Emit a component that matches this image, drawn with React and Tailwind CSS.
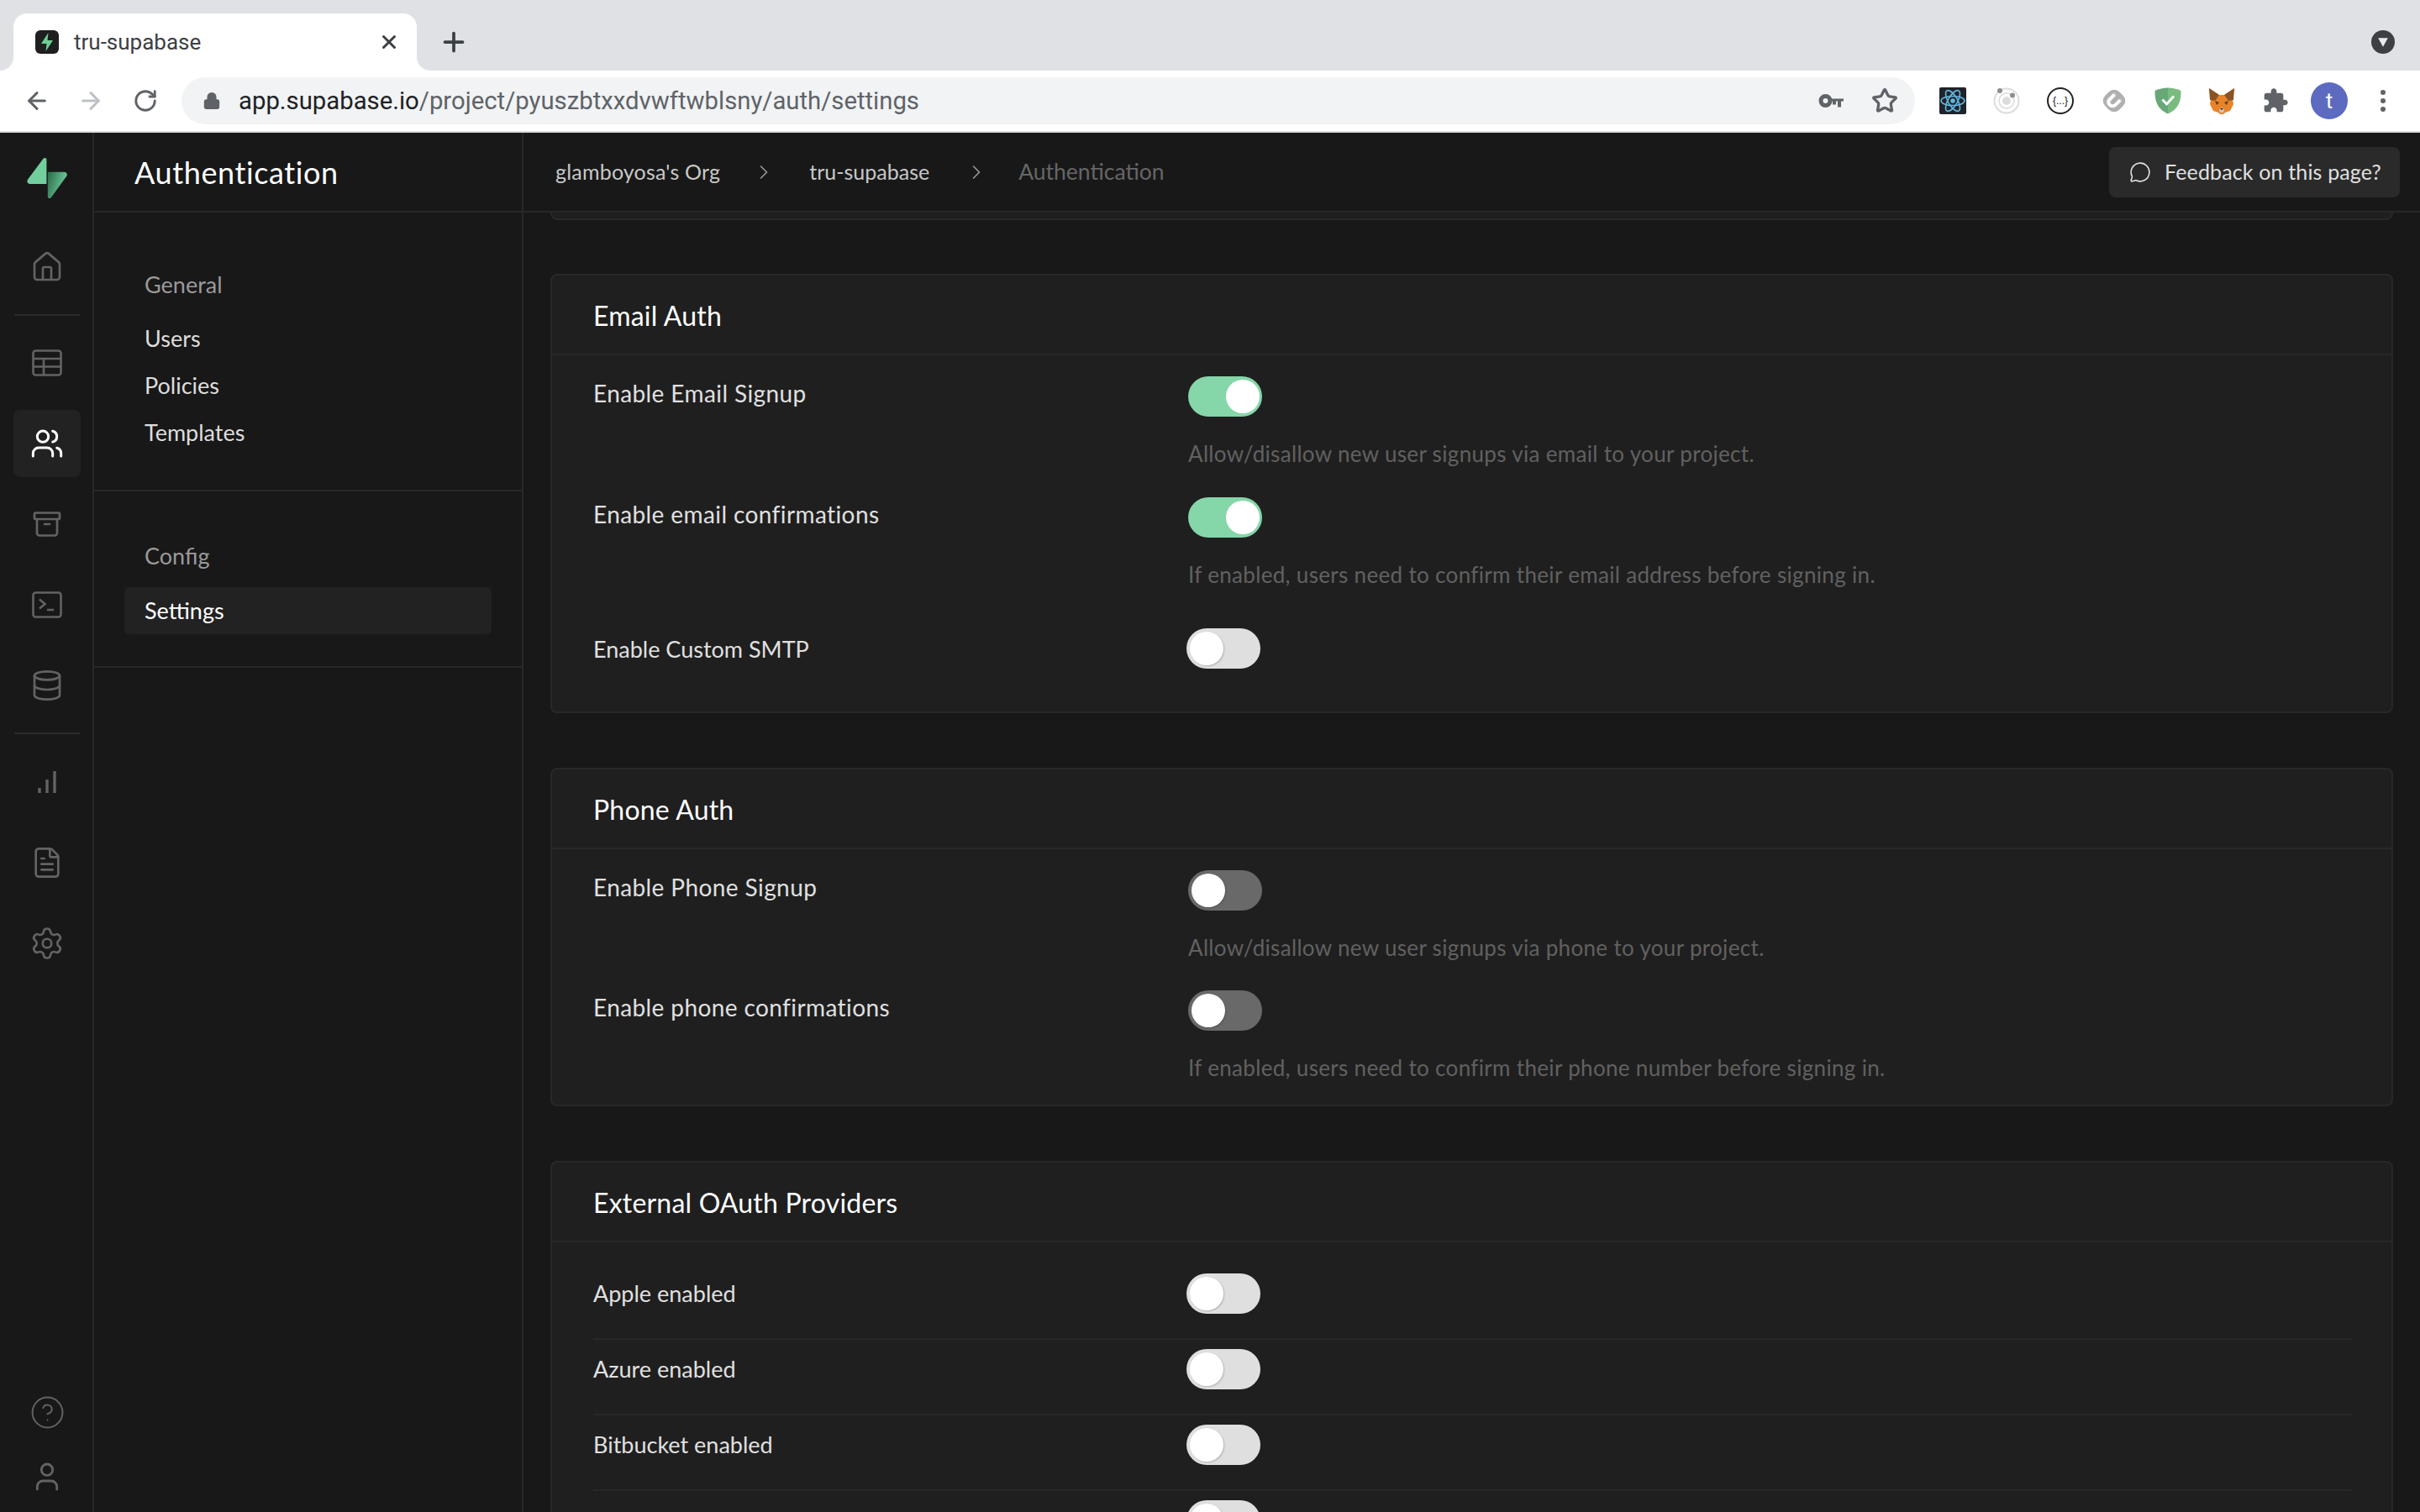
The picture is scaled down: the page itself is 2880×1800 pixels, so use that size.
import React from 'react';
import { ArrowLeft, ArrowRight, RotateCw, Lock, Star, X, Plus, Home, Users, Archive, Database, FileText, Settings, CircleHelp, User, MessageCircle, ChevronRight } from 'lucide-react';

const font = 'font-["Lato","Liberation_Sans",sans-serif]';

// supabase mark, two halves
const Bolt = ({ className }) => (
    <svg viewBox="0 0 48 50" className={className}>
        <defs>
            <linearGradient id="boltGrad" x1="0" y1="0.25" x2="0.9" y2="0.6">
                <stop offset="0" stopColor="#2f7250" />
                <stop offset="1" stopColor="#6fce9c" />
            </linearGradient>
        </defs>
        <path d="M19.8 1.6C21 .2 23.4 1 23.4 2.8V32H3.6C.8 32-.6 28.8 1.2 26.6z" fill="#72cf9d" />
        <path d="M24.8 17.7H44.6c2.8 0 4.2 3.2 2.4 5.4L28.6 48.4c-1.2 1.4-3.8.6-3.8-1.2z" fill="url(#boltGrad)" />
    </svg>
);

const TableIcon = () => (
    <svg viewBox="0 0 36 32" className="w-[36px] h-[32px]" fill="none" stroke="currentColor" strokeWidth="2.6">
        <rect x="1.5" y="1.5" width="33" height="29" rx="3" />
        <path d="M1.5 11h33M1.5 20.5h33M14 11v19.5" />
    </svg>
);

const TerminalIcon = () => (
    <svg viewBox="0 0 36 32" className="w-[36px] h-[32px]" fill="none" stroke="currentColor" strokeWidth="2.6">
        <rect x="1.5" y="1.5" width="33" height="29" rx="3" />
        <path d="M9 9.5l6.5 5.5L9 20.5M18 22h8" />
    </svg>
);

const ChartIcon = () => (
    <svg viewBox="0 0 24 28" className="w-[24px] h-[28px]" fill="none" stroke="currentColor" strokeWidth="3.4">
        <path d="M3 27v-6M12 27V11M21 27V1" />
    </svg>
);

const KeyIcon = () => (
    <svg viewBox="0 0 30 20" className="w-[30px] h-[20px]" fill="none" stroke="#5f6368">
        <circle cx="8.5" cy="10" r="5.5" strokeWidth="5" />
        <path d="M14 7.5h16v3h-3v7h-4v-7h-2v4h-4v-4h-3z" fill="#5f6368" strokeWidth="0" />
    </svg>
);

const ReactIcon = () => (
    <div className="w-[32px] h-[32px] rounded-[2px] bg-[#20232a] flex items-center justify-center">
        <svg viewBox="-14 -14 28 28" className="w-[30px] h-[30px]" fill="none" stroke="#61b8e0" strokeWidth="1.5">
            <circle r="2.6" fill="#61b8e0" stroke="none" />
            <ellipse rx="13" ry="5.2" />
            <ellipse rx="13" ry="5.2" transform="rotate(60)" />
            <ellipse rx="13" ry="5.2" transform="rotate(120)" />
        </svg>
    </div>
);

const IonicIcon = () => (
    <svg viewBox="0 0 32 32" className="w-[32px] h-[32px]" fill="none">
        <circle cx="16" cy="16" r="14.5" stroke="#dcdcdc" strokeWidth="2" />
        <circle cx="16" cy="16" r="9" stroke="#dcdcdc" strokeWidth="1.5" />
        <circle cx="16" cy="16" r="5" fill="#dcdcdc" />
        <circle cx="8" cy="4" r="3" fill="#8e8e8e" />
        <circle cx="23" cy="9.5" r="3" fill="#8e8e8e" />
    </svg>
);

const JsonIcon = () => (
    <div className="w-[32px] h-[32px] rounded-full border-2 border-[#222222] flex items-center justify-center text-[12px] font-['Liberation_Sans',sans-serif] text-[#111111] whitespace-nowrap">
        {'{...}'}
    </div>
);

const MagnetIcon = () => (
    <svg viewBox="0 0 32 32" className="w-[32px] h-[32px]">
        <rect x="4" y="4" width="24" height="24" rx="9" transform="rotate(45 16 16)" fill="#b0b0b0" />
        <path d="M17.5 7.5l-6.500 6.500c-2.200 2.200-2.200 4.800-.2 6.800s4.800 2 7-.2l6.500-6.500" fill="none" stroke="#fff" strokeWidth="4" />
        <path d="M15 6l5 5M21 12l5 5" stroke="#b0b0b0" strokeWidth="1.2" />
    </svg>
);

const ShieldIcon = () => (
    <svg viewBox="0 0 32 32" className="w-[32px] h-[32px]">
        <path d="M16 .5C11 .5 5 2 .5 4c0 10 1 21 15.5 27.5z" fill="#68a878" />
        <path d="M16 .5c5 0 11 1.500 15.500 3.500 0 10-1 21-15.500 27.500z" fill="#78bc80" />
        <path d="M9.500 14.500l5 5.500 8.500-9.500" fill="none" stroke="#fff" strokeWidth="2.800" />
    </svg>
);

const FoxIcon = () => (
    <svg viewBox="0 0 32 32" className="w-[32px] h-[32px]">
        <path d="M1 1l12 8h6l12-8-2 14 1 5-4 8-6 2-2 2h-4l-2-2-6-2-4-8 1-5z" fill="#e8832a" />
        <path d="M1 1l12 8-5 7-6-1zM31 1L19 9l5 7 6-1z" fill="#8a5426" />
        <path d="M8 16l5 2-3 3zM24 16l-5 2 3 3z" fill="#5f3d1e" />
        <path d="M13 26l3-2 3 2-1 4h-4z" fill="#d8c8b8" />
        <path d="M14 25h4l-2 2z" fill="#222222" />
    </svg>
);

const PuzzleIcon = () => (
    <svg viewBox="0 0 24 24" className="w-[32px] h-[32px]" fill="#5f6368">
        <path d="M20.5 11H19V7c0-1.100-.9-2-2-2h-4V3.500C13 2.120 11.880 1 10.500 1S8 2.120 8 3.500V5H4c-1.100 0-1.990.9-1.990 2v3.800H3.500c1.490 0 2.700 1.210 2.700 2.700s-1.210 2.700-2.700 2.700H2V20c0 1.100.9 2 2 2h3.800v-1.500c0-1.490 1.210-2.700 2.700-2.700 1.490 0 2.700 1.210 2.700 2.700V22H17c1.100 0 2-.9 2-2v-4h1.500c1.380 0 2.500-1.120 2.500-2.500S21.880 11 20.500 11z" />
    </svg>
);

const Toggle = ({ on, dark }) => {
    if (on) {
        return (
            <div className="w-[88px] h-[48px] rounded-full bg-[#85d6a8] flex items-center justify-end pr-[3px] shrink-0">
                <div className="w-[40px] h-[40px] rounded-full bg-white" />
            </div>
        );
    }
    return (
        <div className={`w-[88px] h-[48px] rounded-full flex items-center pl-[4px] shrink-0 ${dark ? 'bg-[#696969]' : 'bg-[#dfdfdf] -ml-[2px]'}`}>
            <div className="w-[40px] h-[40px] rounded-full bg-white shadow-[1px_1px_2px_rgba(0,0,0,0.2)]" />
        </div>
    );
};

const SideItem = ({ children, active, className }) => (
    <div className={`w-[80px] h-[80px] rounded-[8px] flex items-center justify-center shrink-0 ${active ? 'bg-[#222222] text-white' : 'text-[#636363]'} ${className || ''}`}>
        {children}
    </div>
);

const SettingRow = ({ label, desc, on, dark, className }) => (
    <div className={`flex ${className || ''}`}>
        <div className="w-[757px] pl-[49px] pt-[2px] text-[28px] tracking-[0.4px] leading-[36px] text-[#e0e0e0] shrink-0">{label}</div>
        <div>
            <Toggle on={on} dark={dark} />
            {desc && <div className="mt-[26px] text-[26px] tracking-[0.33px] leading-[36px] text-[#616161]">{desc}</div>}
        </div>
    </div>
);

const Card = ({ title, children, className }) => (
    <div className={`border-2 border-[#282828] rounded-[8px] bg-[#1f1f1f] ${className || ''}`}>
        <div className="h-[95px] border-b-2 border-[#282828] pl-[49px] pt-[2px] flex items-center text-[32px] tracking-[0.2px] text-white">{title}</div>
        {children}
    </div>
);

const NavLink = ({ children, active }) => (
    <div className={`h-[56px] rounded-[6px] pl-[24px] flex items-center text-[27px] ${active ? 'bg-[#222222] text-white' : 'text-[#dddddd]'}`}>{children}</div>
);

const OAuthRow = ({ label, last }) => (
    <div className={`h-[90px] pt-[11px] flex items-start ml-[49px] mr-[48px] ${last ? '' : 'border-b-2 border-[#282828]'}`}>
        <div className="w-[708px] h-[48px] flex items-center text-[27px] text-[#e0e0e0] shrink-0">{label}</div>
        <Toggle />
    </div>
);

export default function App() {
    return (
        <div className={`w-[2880px] h-[1800px] overflow-hidden flex flex-col bg-[#181818] ${font}`}>
            {/* browser chrome */}
            <div className="h-[84px] bg-[#dfe1e5] flex items-end pl-[16px] pr-[30px] shrink-0 font-['Roboto',sans-serif]">
                <div className="relative w-[480px] h-[68px] bg-white rounded-t-[16px] flex items-center pl-[26px] pr-[20px]">
                    <div className="absolute left-[-16px] bottom-0 w-[16px] h-[16px] bg-white">
                        <div className="w-full h-full bg-[#dfe1e5] rounded-br-[16px]" />
                    </div>
                    <div className="absolute right-[-16px] bottom-0 w-[16px] h-[16px] bg-white">
                        <div className="w-full h-full bg-[#dfe1e5] rounded-bl-[16px]" />
                    </div>
                    <div className="w-[28px] h-[28px] rounded-[6px] bg-[#1f1f1f] flex items-center justify-center">
                        <svg viewBox="0 0 24 24" className="w-[24px] h-[24px]"><path d="M13.500 1 5 14h6.500l-1 9L19 10h-6.500z" fill="#6ccf97" /></svg>
                    </div>
                    <span className="ml-[18px] text-[26px] text-[#3c4043] flex-1">tru-supabase</span>
                    <X size={26} strokeWidth={2.75} className="text-[#3c4043]" />
                </div>
                <div className="h-[68px] flex items-center ml-[26px] flex-1">
                    <Plus size={36} strokeWidth={2.5} className="text-[#3c4043]" />
                </div>
                <div className="h-[68px] flex items-center">
                    <div className="w-[28px] h-[28px] rounded-full bg-[#3c4043] flex items-center justify-center">
                        <svg viewBox="0 0 12 12" className="w-[14px] h-[14px]"><path d="M1 2h10L6 11z" fill="#e8eaed" /></svg>
                    </div>
                </div>
            </div>
            <div className="h-[74px] bg-white border-b-2 border-[#dadce0] flex items-center shrink-0 pl-[28px] font-['Roboto',sans-serif]">
                <ArrowLeft size={32} strokeWidth={2.25} className="text-[#5f6368]" />
                <ArrowRight size={32} strokeWidth={2.25} className="text-[#bdc1c6] ml-[32px]" />
                <RotateCw size={30} strokeWidth={2.25} className="text-[#5f6368] ml-[34px]" />
                <div className="ml-[28px] w-[2063px] h-[56px] rounded-full bg-[#f1f3f4] flex items-center pl-[25px] pr-[20px]">
                    <Lock size={22} className="text-[#5f6368]" fill="#5f6368" />
                    <div className="ml-[21px] pt-[1px] text-[29.300px] text-[#202124] flex-1">app.supabase.io<span className="text-[#5f6368]">/project/pyuszbtxxdvwftwblsny/auth/settings</span></div>
                    <KeyIcon />
                    <Star size={32} strokeWidth={2.5} className="text-[#5f6368] ml-[33px]" />
                </div>
                <div className="ml-[13px] flex items-center">
                    <div className="w-[64px] flex justify-center"><ReactIcon /></div>
                    <div className="w-[64px] flex justify-center"><IonicIcon /></div>
                    <div className="w-[64px] flex justify-center"><JsonIcon /></div>
                    <div className="w-[64px] flex justify-center"><MagnetIcon /></div>
                    <div className="w-[64px] flex justify-center"><ShieldIcon /></div>
                    <div className="w-[64px] flex justify-center"><FoxIcon /></div>
                    <div className="w-[64px] flex justify-center"><PuzzleIcon /></div>
                    <div className="w-[64px] flex justify-center">
                        <div className="w-[44px] h-[44px] rounded-full bg-[#5c6bc0] text-white text-[26px] flex items-center justify-center">t</div>
                    </div>
                    <div className="w-[64px] flex flex-col items-center gap-[4px]">
                        <div className="w-[6px] h-[6px] rounded-full bg-[#5f6368]" />
                        <div className="w-[6px] h-[6px] rounded-full bg-[#5f6368]" />
                        <div className="w-[6px] h-[6px] rounded-full bg-[#5f6368]" />
                    </div>
                </div>
            </div>

            <div className="flex flex-1 min-h-0">
                {/* icon rail */}
                <div className="w-[112px] pl-[2px] border-r-2 border-[#282828] flex flex-col items-center shrink-0">
                    <Bolt className="w-[48px] h-[50px] mt-[29px] mb-[41px] shrink-0" />
                    <SideItem><Home size={40} strokeWidth={1.6} /></SideItem>
                    <div className="w-[78px] h-[2px] bg-[#2a2a2a] my-[16px] shrink-0" />
                    <SideItem><TableIcon /></SideItem>
                    <SideItem active className="mt-[16px]"><Users size={40} strokeWidth={1.8} /></SideItem>
                    <SideItem className="mt-[16px]"><Archive size={36} strokeWidth={1.8} /></SideItem>
                    <SideItem className="mt-[16px]"><TerminalIcon /></SideItem>
                    <SideItem className="mt-[16px]"><Database size={40} strokeWidth={1.6} /></SideItem>
                    <div className="w-[78px] h-[2px] bg-[#2a2a2a] mt-[16px] mb-[17px] shrink-0" />
                    <SideItem><ChartIcon /></SideItem>
                    <SideItem className="mt-[16px]"><FileText size={40} strokeWidth={1.6} /></SideItem>
                    <SideItem className="mt-[16px]"><Settings size={42} strokeWidth={1.5} /></SideItem>
                    <div className="flex-1" />
                    <SideItem className="text-[#7a7a7a]"><CircleHelp size={43} strokeWidth={1.1} /></SideItem>
                    <SideItem className="-mt-[3px] mb-[2px]"><User size={40} strokeWidth={1.7} /></SideItem>
                </div>

                {/* nav panel */}
                <div className="w-[511px] border-r-2 border-[#282828] shrink-0">
                    <div className="h-[95px] border-b-2 border-[#282828] pl-[48px] flex items-center text-[36px] tracking-[0.6px] text-white">Authentication</div>
                    <div className="px-[36px] pt-[66px] pb-[39px] border-b-2 border-[#282828]">
                        <div className="pl-[24px] text-[27px] text-[#9a9a9a] mb-[16px]">General</div>
                        <NavLink>Users</NavLink>
                        <NavLink>Policies</NavLink>
                        <NavLink>Templates</NavLink>
                    </div>
                    <div className="px-[36px] pt-[57px] pb-[38px] border-b-2 border-[#282828]">
                        <div className="pl-[24px] text-[27px] text-[#9a9a9a] mb-[17px]">Config</div>
                        <NavLink active>Settings</NavLink>
                    </div>
                </div>

                {/* main */}
                <div className="flex-1 min-w-0 flex flex-col">
                    <div className="h-[95px] border-b-2 border-[#282828] flex items-center pl-[38px] pr-[24px] text-[25px] text-[#c8c8c8] shrink-0">
                        <span className="tracking-[0.2px]">glamboyosa's Org</span>
                        <ChevronRight size={28} strokeWidth={1.4} className="ml-[38px] mr-[40px] text-[#9a9a9a]" />
                        <span>tru-supabase</span>
                        <ChevronRight size={28} strokeWidth={1.4} className="ml-[42px] mr-[36px] text-[#9a9a9a]" />
                        <span className="text-[#666666] text-[26.500px]">Authentication</span>
                        <div className="ml-auto h-[60px] w-[346px] rounded-[8px] bg-[#2a2a2a] flex items-center pl-[24px] text-[#e0e0e0] tracking-[0.15px]">
                            <MessageCircle size={26} strokeWidth={1.5} className="mr-[16px]" />
                            Feedback on this page?
                        </div>
                    </div>
                    <div className="flex-1 min-h-0 overflow-hidden pl-[32px] pr-[32px]">
                        <div className="h-[9px] border-2 border-t-0 border-[#282828] rounded-b-[8px] bg-[#1f1f1f]" />
                        <Card title="Email Auth" className="mt-[64px] h-[523px]">
                            <SettingRow className="pt-[25px]" label="Enable Email Signup" desc="Allow/disallow new user signups via email to your project." on />
                            <SettingRow className="pt-[34px]" label="Enable email confirmations" desc="If enabled, users need to confirm their email address before signing in." on />
                            <div className="flex items-center pt-[46px]">
                                <div className="w-[757px] pl-[49px] pt-[2px] text-[27px] text-[#e0e0e0] shrink-0">Enable Custom SMTP</div>
                                <Toggle />
                            </div>
                        </Card>
                        <Card title="Phone Auth" className="mt-[65px] h-[403px]">
                            <SettingRow className="pt-[25px]" label="Enable Phone Signup" desc="Allow/disallow new user signups via phone to your project." dark />
                            <SettingRow className="pt-[33px]" label="Enable phone confirmations" desc="If enabled, users need to confirm their phone number before signing in." dark />
                        </Card>
                        <Card title="External OAuth Providers" className="mt-[65px]">
                            <div className="pt-[26px]">
                                <OAuthRow label="Apple enabled" />
                                <OAuthRow label="Azure enabled" />
                                <OAuthRow label="Bitbucket enabled" />
                                <OAuthRow label="" last />
                            </div>
                        </Card>
                    </div>
                </div>
            </div>
        </div>
    );
}
